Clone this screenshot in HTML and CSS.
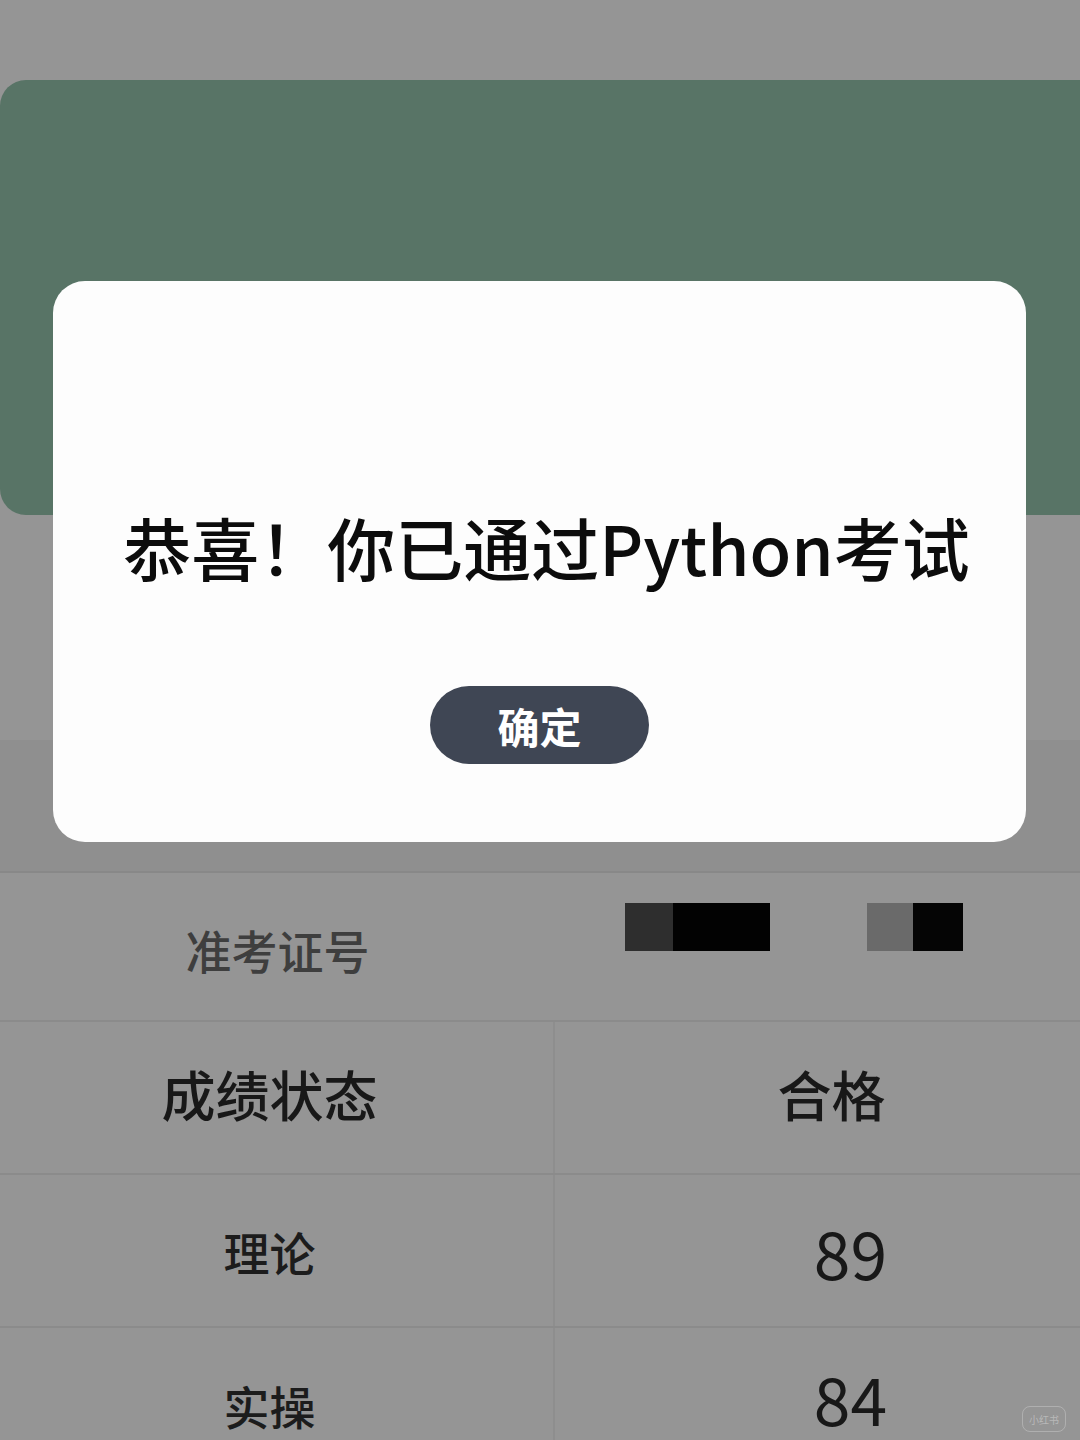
FILE: index.html
```html
<!DOCTYPE html>
<html>

<head>
<meta charset="utf-8">
<link rel="stylesheet" href="styles.css">
</head>

<body>
  <div class="page">
    <div class="topbar"></div>
    <div class="hero"></div>
    <div class="spacer"></div>
    <div class="band"></div>

    <!-- score table -->
    <div class="scores">
      <div class="row first">
        <div class="cell label faded">准考证号</div>
        <div class="cell ticket">
          <span class="mask wide"><i></i><b></b></span>
          <span class="mask narrow"><i></i><b></b></span>
        </div>
      </div>
      <div class="row">
        <div class="cell label big">成绩状态</div>
        <div class="cell value big">合格</div>
      </div>
      <div class="row">
        <div class="cell label">理论</div>
        <div class="cell value num">89</div>
      </div>
      <div class="row last">
        <div class="cell label">实操</div>
        <div class="cell value num">84</div>
      </div>
    </div>

    <!-- result dialog -->
    <div class="dialog">
      <h1 class="dialog-title">恭喜！你已通过Python考试</h1>
      <span class="okButton">确定</span>
    </div>

    <div class="watermark">小红书</div>
  </div>
</body>
</html>
```

FILE: styles.css
```css
* {
  box-sizing: border-box;
}

body {
  margin: 0;
  background-color: rgb(149, 149, 149);
  font-family: "Noto Sans CJK SC", "Noto Sans", sans-serif;
  overflow: hidden;
}

.page {
  position: relative;
  width: 1080px;
  height: 1440px;
  overflow: hidden;
}

/* Dimmed page behind the dialog */

.topbar {
  height: 80px;
}

.hero {
  height: 435px;
  margin-right: -40px;
  background-color: rgb(88, 116, 102);
  border-radius: 26px;
}

.spacer {
  height: 225px;
}

.band {
  height: 133px;
  background-color: rgb(143, 143, 143);
  border-bottom: 2px solid rgb(136, 136, 136);
}

/* Score table */

.row {
  display: grid;
  grid-template-columns: 555px 1fr;
  height: 153px;
  border-bottom: 2px solid rgb(139, 139, 139);
}

.row.first {
  height: 149px;
}

/* last row runs into the bottom edge of the screen */
.row.last {
  height: 112px;
  border-bottom: none;
}

.row.last .label {
  padding-top: 42px;
}

.row.last .value {
  padding-top: 26px;
}

.cell {
  display: flex;
  align-items: center;
  justify-content: center;
  line-height: 1;
}

.row:not(.first) .cell.label {
  border-right: 2px solid rgb(142, 142, 142);
}

.label {
  padding-right: 14px;
  font-size: 46px;
  font-weight: 500;
  color: rgb(28, 28, 28);
}

.label.faded {
  color: rgb(62, 62, 62);
  padding-right: 0;
  padding-top: 4px;
}

.label.big,
.value.big {
  font-size: 54px;
  color: rgb(24, 24, 24);
  padding-bottom: 8px;
}

.value {
  padding-left: 56px;
  font-weight: 500;
  color: rgb(24, 24, 24);
}

.value.big {
  padding-left: 28px;
}

.value.num {
  font-size: 66px;
  font-weight: 400;
  padding-left: 66px;
}

/* Redacted ticket number */

.ticket {
  justify-content: flex-start;
  align-items: flex-start;
  padding: 30px 0 0 70px;
  gap: 97px;
}

.mask {
  display: flex;
  height: 48px;
}

.mask i,
.mask b {
  display: block;
  height: 100%;
}

.mask.wide i {
  width: 48px;
  background-color: rgb(46, 46, 46);
}

.mask.wide b {
  width: 97px;
  background-color: rgb(2, 2, 2);
}

.mask.narrow i {
  width: 46px;
  background-color: rgb(106, 106, 106);
}

.mask.narrow b {
  width: 50px;
  background-color: rgb(5, 5, 5);
}

/* Dialog */

.dialog {
  position: absolute;
  left: 53px;
  top: 281px;
  width: 973px;
  height: 561px;
  background-color: rgb(253, 253, 253);
  border-radius: 32px;
  display: flex;
  flex-direction: column;
  align-items: center;
  padding-top: 232px;
}

.dialog-title {
  margin: 0 0 0 14px;
  font-size: 68px;
  line-height: 1;
  font-weight: 500;
  color: rgb(12, 12, 12);
  white-space: nowrap;
}

.okButton {
  margin-top: 105px;
  width: 219px;
  height: 78px;
  border-radius: 39px;
  background-color: rgb(63, 70, 84);
  color: white;
  font-size: 42px;
  font-weight: 700;
  display: flex;
  align-items: center;
  justify-content: center;
}

.watermark {
  position: absolute;
  right: 14px;
  bottom: 8px;
  width: 44px;
  height: 26px;
  border-radius: 8px;
  border: 1px solid rgba(255, 255, 255, 0.25);
  color: rgba(255, 255, 255, 0.35);
  font-size: 10px;
  display: flex;
  align-items: center;
  justify-content: center;
}
```
